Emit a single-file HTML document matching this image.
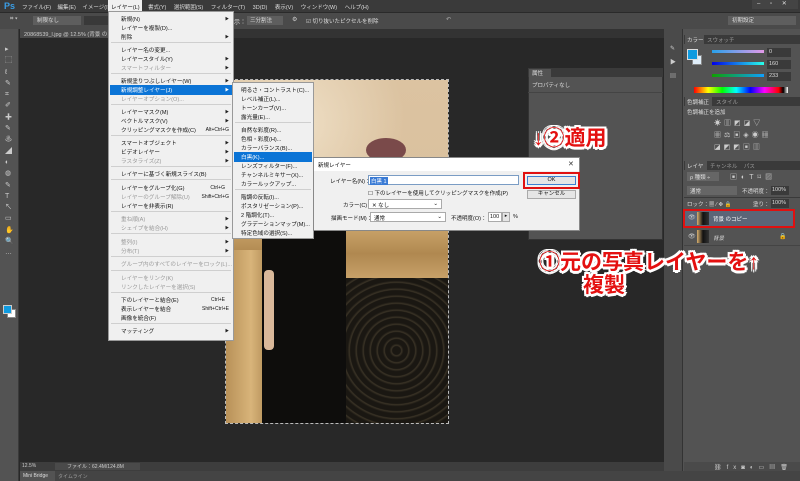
<!DOCTYPE html><html><head><meta charset="utf-8"><style>
*{margin:0;padding:0;box-sizing:border-box}
body{width:800px;height:481px;overflow:hidden;background:#282828;font-family:"Liberation Sans","Noto Sans CJK JP",sans-serif;font-size:6px;color:#ddd;position:relative}
.a{position:absolute}
.m{position:absolute;left:12px;white-space:nowrap;color:#111;font-size:5.6px}
.g{color:#999}
.s{position:absolute;left:2px;right:2px;height:1px;background:#cfcfcf}
.ar{position:absolute;right:4px;font-size:4px;color:#222}
.k{position:absolute;right:16px;color:#111;font-size:5px}
.ann{position:absolute;font-weight:bold;color:#e41010;font-size:21px;white-space:nowrap;line-height:22px;text-shadow:-2px -2px 0 #fff,2px -2px 0 #fff,-2px 2px 0 #fff,2px 2px 0 #fff,0 2px 0 #fff,0 -2px 0 #fff,2px 0 0 #fff,-2px 0 0 #fff,0 3px 0 #fff,3px 0 0 #fff}
</style></head><body>
<!-- menu bar -->
<div class="a" style="left:0;top:0;width:800px;height:12px;background:#3a3a3a"></div>
<div class="a" style="left:4px;top:1px;color:#3a9ee6;font-weight:bold;font-size:9px">Ps</div>
<div class="a" style="left:22px;top:3px;color:#ddd;white-space:nowrap;word-spacing:5px;font-size:5.5px">ファイル(F) 編集(E) イメージ(I)</div>
<div class="a" style="left:108px;top:0;width:34px;height:12px;background:#f0f0f0"></div>
<div class="a" style="left:111px;top:3px;color:#111;font-size:5.5px">レイヤー(L)</div>
<div class="a" style="left:148px;top:3px;color:#ddd;white-space:nowrap;word-spacing:6px;font-size:5.5px">書式(Y) 選択範囲(S) フィルター(T) 3D(D) 表示(V) ウィンドウ(W) ヘルプ(H)</div>
<div class="a" style="left:752px;top:0;width:46px;height:9px;background:#444;color:#ddd;font-size:6px;padding-left:5px;word-spacing:8px">–  ▫  ✕</div>
<!-- options bar -->
<div class="a" style="left:0;top:12px;width:800px;height:17px;background:#4a4a4a;border-top:1px solid #2a2a2a"></div>
<div class="a" style="left:10px;top:16px;color:#ccc">⌗ ▾</div>
<div class="a" style="left:33px;top:16px;width:48px;height:9px;background:#5e5e5e;color:#ddd;padding-left:4px;font-size:5.5px">制限なし</div>
<div class="a" style="left:84px;top:16px;width:24px;height:9px;background:#393939"></div>
<div class="a" style="left:234px;top:17px;color:#ddd">示：</div>
<div class="a" style="left:247px;top:16px;width:36px;height:9px;background:#5e5e5e;color:#ddd;padding-left:3px;font-size:5.5px">三分割法</div>
<div class="a" style="left:292px;top:16px;color:#ccc">⚙</div>
<div class="a" style="left:306px;top:17px;color:#ddd;font-size:5.5px">☑ 切り抜いたピクセルを削除</div>
<div class="a" style="left:446px;top:16px;color:#aaa">↶</div>
<div class="a" style="left:728px;top:16px;width:68px;height:9px;background:#5e5e5e;color:#ddd;padding-left:4px;font-size:5.5px">初期設定</div>
<!-- tool bar -->
<div class="a" style="left:0;top:29px;width:19px;height:452px;background:#535353;border-right:1px solid #3a3a3a"></div>
<div class="a" style="left:5px;top:44px;width:10px;height:300px;color:#ccc;font-size:7px;line-height:11.3px">▸<br>⬚<br>ℓ<br>✎<br>⌗<br>✐<br>✚<br>✎<br>♨<br>◢<br>◐<br>◍<br>✎<br>T<br>↖<br>▭<br>✋<br>🔍<br>…</div>
<div class="a" style="left:7px;top:309px;width:9px;height:9px;background:#fff;border:1px solid #888"></div>
<div class="a" style="left:3px;top:305px;width:9px;height:9px;background:#0f9be0;border:1px solid #ccc"></div>
<!-- doc tab -->
<div class="a" style="left:20px;top:29px;width:645px;height:9px;background:#333"></div>
<div class="a" style="left:20px;top:29px;width:90px;height:9px;background:#4a4a4a;color:#ccc;font-size:5.5px;padding:1px 0 0 4px;white-space:nowrap;overflow:hidden">20868539_l.jpg @ 12.5% (背景 の</div>
<!-- image -->
<div class="a" style="left:226px;top:80px;width:222px;height:343px;background:linear-gradient(#e6d3b6,#ddc4a0 40%,#c9a878);overflow:hidden;outline:1px dashed #bbb">
 <div class="a" style="left:0;top:0;width:222px;height:148px;background:radial-gradient(circle at 30% 30%,#f2e4cc 0,#d9bf9c 60%);opacity:.8"></div>
 <div class="a" style="left:140px;top:58px;width:40px;height:24px;background:#7a4a4a;border-radius:50%"></div>
 <div class="a" style="left:6px;top:148px;width:216px;height:52px;background:linear-gradient(#c9a36a,#b08850 50%,#c9a36a)"></div>
 <div class="a" style="left:0;top:170px;width:50px;height:173px;background:linear-gradient(90deg,#b89158,#d8b47a 50%,#a07a45)"></div>
 <div class="a" style="left:119px;top:198px;width:103px;height:145px;background:repeating-radial-gradient(circle at 50% 50%,#1a1712 0,#1a1712 4px,#3a3326 5px,#1a1712 7px)"></div>
 <div class="a" style="left:36px;top:120px;width:84px;height:223px;background:#0e0d0c;border-radius:18px 18px 0 0"></div>
 <div class="a" style="left:38px;top:190px;width:10px;height:80px;background:#d9b89a;border-radius:4px"></div>
</div>
<!-- status bar -->
<div class="a" style="left:20px;top:462px;width:645px;height:9px;background:#3d3d3d"></div>
<div class="a" style="left:22px;top:463px;color:#ccc;font-size:5px">12.5%</div>
<div class="a" style="left:55px;top:463px;width:85px;height:7px;background:#4a4a4a;color:#ccc;font-size:5px;padding-left:12px">ファイル：62.4M/124.8M</div>
<div class="a" style="left:20px;top:471px;width:780px;height:10px;background:#444"></div>
<div class="a" style="left:20px;top:471px;width:35px;height:10px;background:#535353;color:#ddd;font-size:5px;padding:2px 0 0 3px">Mini Bridge</div>
<div class="a" style="left:58px;top:473px;color:#999;font-size:5px">タイムライン</div>
<!-- properties panel -->
<div class="a" style="left:528px;top:68px;width:135px;height:172px;background:#535353;border:1px solid #333"></div>
<div class="a" style="left:528px;top:68px;width:135px;height:9px;background:#3a3a3a"></div>
<div class="a" style="left:529px;top:69px;width:22px;height:8px;background:#535353;color:#ddd;font-size:5.5px;padding-left:3px">属性</div>
<div class="a" style="left:532px;top:81px;color:#ddd;font-size:5.5px">プロパティなし</div>
<div class="a" style="left:528px;top:92px;width:135px;height:1px;background:#444"></div>
<!-- right strip -->
<div class="a" style="left:664px;top:29px;width:136px;height:442px;background:#535353"></div>
<div class="a" style="left:664px;top:29px;width:19px;height:442px;background:#4a4a4a;border-right:1px solid #333"></div>
<div class="a" style="left:670px;top:42px;color:#ccc;line-height:14px">✎<br>▶<br>▤</div>
<!-- color panel -->
<div class="a" style="left:684px;top:35px;width:116px;height:9px;background:#3a3a3a"></div>
<div class="a" style="left:685px;top:35px;width:19px;height:9px;background:#535353;color:#ddd;font-size:5.5px;padding:1px 0 0 2px">カラー</div>
<div class="a" style="left:707px;top:36px;color:#999;font-size:5.5px">スウォッチ</div>
<div class="a" style="left:692px;top:55px;width:10px;height:10px;background:#dfeefa;border:1px solid #888"></div>
<div class="a" style="left:687px;top:49px;width:11px;height:11px;background:#0f9be0;border:1px solid #ddd"></div>
<div class="a" style="left:712px;top:50px;width:52px;height:3px;background:linear-gradient(90deg,#28a0e9,#e39ae9)"></div>
<div class="a" style="left:712px;top:62px;width:52px;height:3px;background:linear-gradient(90deg,#0000e9,#29ffe9)"></div>
<div class="a" style="left:712px;top:74px;width:52px;height:3px;background:linear-gradient(90deg,#0fa000,#0fa0ff)"></div>
<div class="a" style="left:767px;top:48px;width:24px;height:9px;background:#3a3a3a;color:#ddd;font-size:5.5px;padding:1px 2px">0</div>
<div class="a" style="left:767px;top:60px;width:24px;height:9px;background:#3a3a3a;color:#ddd;font-size:5.5px;padding:1px 2px">160</div>
<div class="a" style="left:767px;top:72px;width:24px;height:9px;background:#3a3a3a;color:#ddd;font-size:5.5px;padding:1px 2px">233</div>
<div class="a" style="left:694px;top:87px;width:94px;height:6px;background:linear-gradient(90deg,#f00,#ff0,#0f0,#0ff,#00f,#f0f,#f00 90%,#000 95%,#fff)"></div>
<!-- adjustments -->
<div class="a" style="left:684px;top:97px;width:116px;height:9px;background:#3a3a3a"></div>
<div class="a" style="left:685px;top:97px;width:27px;height:9px;background:#535353;color:#ddd;font-size:5.5px;padding:1px 0 0 2px">色調補正</div>
<div class="a" style="left:716px;top:98px;color:#999;font-size:5.5px">スタイル</div>
<div class="a" style="left:687px;top:108px;color:#ddd;font-size:5.5px">色調補正を追加</div>
<div class="a" style="left:714px;top:118px;color:#ccc;font-size:7px;line-height:12px;letter-spacing:3px">☀▥◩◪▽<br>▦⚖▣◈◉▦<br>◪◩◩▣▥</div>
<!-- layers -->
<div class="a" style="left:684px;top:161px;width:116px;height:9px;background:#3a3a3a"></div>
<div class="a" style="left:685px;top:161px;width:22px;height:9px;background:#535353;color:#ddd;font-size:5.5px;padding:1px 0 0 2px">レイヤー</div>
<div class="a" style="left:710px;top:162px;color:#999;font-size:5.5px;word-spacing:5px">チャンネル パス</div>
<div class="a" style="left:687px;top:172px;width:32px;height:9px;background:#666;color:#ddd;font-size:5.5px;padding:1px 0 0 3px">ρ 種類 ÷</div>
<div class="a" style="left:730px;top:172px;color:#ccc;font-size:7px;letter-spacing:4px">▣◐T⌑▨</div>
<div class="a" style="left:687px;top:186px;width:50px;height:9px;background:#666;color:#ddd;font-size:5.5px;padding:1px 0 0 3px">通常</div>
<div class="a" style="left:742px;top:187px;color:#ddd;font-size:5.5px">不透明度：</div>
<div class="a" style="left:771px;top:186px;width:18px;height:9px;background:#3a3a3a;color:#ddd;font-size:5.5px;padding:1px">100%</div>
<div class="a" style="left:684px;top:197px;width:116px;height:1px;background:#3a3a3a"></div>
<div class="a" style="left:687px;top:200px;color:#ddd;font-size:5.5px">ロック：▦ ⁄ ✥ 🔒</div>
<div class="a" style="left:753px;top:200px;color:#ddd;font-size:5.5px">塗り：</div>
<div class="a" style="left:771px;top:199px;width:18px;height:9px;background:#3a3a3a;color:#ddd;font-size:5.5px;padding:1px">100%</div>
<div class="a" style="left:684px;top:210px;width:111px;height:17px;background:#5b6577"></div>
<div class="a" style="left:683px;top:209px;width:112px;height:19px;border:2px solid #e01010"></div>
<div class="a" style="left:688px;top:214px;color:#ccc;font-size:6px">👁</div>
<div class="a" style="left:697px;top:212px;width:12px;height:13px;background:linear-gradient(90deg,#d8b070,#111 50%,#333)"></div>
<div class="a" style="left:713px;top:215px;color:#fff;font-size:5.5px">背景 のコピー</div>
<div class="a" style="left:684px;top:228px;width:116px;height:18px;background:#535353;border-bottom:1px solid #444"></div>
<div class="a" style="left:688px;top:233px;color:#ccc;font-size:6px">👁</div>
<div class="a" style="left:697px;top:230px;width:12px;height:13px;background:linear-gradient(90deg,#d8b070,#111 50%,#333)"></div>
<div class="a" style="left:713px;top:234px;color:#ddd;font-size:5.5px;font-style:italic">背景</div>
<div class="a" style="left:779px;top:233px;color:#ccc;font-size:6px">🔒</div>
<div class="a" style="left:684px;top:462px;width:116px;height:9px;background:#4a4a4a;color:#ccc;font-size:6px;padding-left:30px;letter-spacing:5px">⛓fx◙◐▭▤🗑</div>
<!-- main menu -->
<div class="a" style="left:108px;top:11px;width:126px;height:330px;background:#f0f0f0;border:1px solid #999">
<div class="m" style="top:3px">新規(N)</div><div class="ar" style="top:4px">▶</div>
<div class="m" style="top:12px">レイヤーを複製(D)...</div>
<div class="m" style="top:21px">削除</div><div class="ar" style="top:22px">▶</div>
<div class="s" style="top:30px"></div>
<div class="m" style="top:34px">レイヤー名の変更...</div>
<div class="m" style="top:43px">レイヤースタイル(Y)</div><div class="ar" style="top:44px">▶</div>
<div class="m g" style="top:52px">スマートフィルター</div><div class="ar" style="top:53px">▶</div>
<div class="s" style="top:61px"></div>
<div class="m" style="top:65px">新規塗りつぶしレイヤー(W)</div><div class="ar" style="top:66px">▶</div>
<div class="a" style="left:1px;top:73px;width:122px;height:10px;background:#0b74d6"></div>
<div class="m" style="top:74px;color:#fff">新規調整レイヤー(J)</div><div class="ar" style="top:75px;color:#fff">▶</div>
<div class="m g" style="top:83px">レイヤーオプション(O)...</div>
<div class="s" style="top:92px"></div>
<div class="m" style="top:96px">レイヤーマスク(M)</div><div class="ar" style="top:97px">▶</div>
<div class="m" style="top:105px">ベクトルマスク(V)</div><div class="ar" style="top:106px">▶</div>
<div class="m" style="top:114px">クリッピングマスクを作成(C)</div><div class="k" style="top:115px;right:4px">Alt+Ctrl+G</div>
<div class="s" style="top:123px"></div>
<div class="m" style="top:127px">スマートオブジェクト</div><div class="ar" style="top:128px">▶</div>
<div class="m" style="top:136px">ビデオレイヤー</div><div class="ar" style="top:137px">▶</div>
<div class="m g" style="top:145px">ラスタライズ(Z)</div><div class="ar" style="top:146px">▶</div>
<div class="s" style="top:154px"></div>
<div class="m" style="top:158px">レイヤーに基づく新規スライス(B)</div>
<div class="s" style="top:167px"></div>
<div class="m" style="top:172px">レイヤーをグループ化(G)</div><div class="k" style="top:173px;right:8px">Ctrl+G</div>
<div class="m g" style="top:181px">レイヤーのグループ解除(U)</div><div class="k g" style="top:182px;right:4px">Shift+Ctrl+G</div>
<div class="m" style="top:190px">レイヤーを非表示(R)</div>
<div class="s" style="top:199px"></div>
<div class="m g" style="top:203px">重ね順(A)</div><div class="ar" style="top:204px">▶</div>
<div class="m g" style="top:212px">シェイプを結合(H)</div><div class="ar" style="top:213px">▶</div>
<div class="s" style="top:221px"></div>
<div class="m g" style="top:226px">整列(I)</div><div class="ar" style="top:227px">▶</div>
<div class="m g" style="top:235px">分布(T)</div><div class="ar" style="top:236px">▶</div>
<div class="s" style="top:244px"></div>
<div class="m g" style="top:248px">グループ内のすべてのレイヤーをロック(L)...</div>
<div class="s" style="top:258px"></div>
<div class="m g" style="top:262px">レイヤーをリンク(K)</div>
<div class="m g" style="top:271px">リンクしたレイヤーを選択(S)</div>
<div class="s" style="top:280px"></div>
<div class="m" style="top:284px">下のレイヤーと結合(E)</div><div class="k" style="top:285px;right:8px">Ctrl+E</div>
<div class="m" style="top:293px">表示レイヤーを結合</div><div class="k" style="top:294px;right:4px">Shift+Ctrl+E</div>
<div class="m" style="top:302px">画像を統合(F)</div>
<div class="s" style="top:311px"></div>
<div class="m" style="top:315px">マッティング</div><div class="ar" style="top:316px">▶</div>
</div>
<!-- submenu -->
<div class="a" style="left:232px;top:82px;width:82px;height:157px;background:#f0f0f0;border:1px solid #999">
<div class="m" style="left:8px;top:3px">明るさ・コントラスト(C)...</div>
<div class="m" style="left:8px;top:12px">レベル補正(L)...</div>
<div class="m" style="left:8px;top:21px">トーンカーブ(V)...</div>
<div class="m" style="left:8px;top:30px">露光量(E)...</div>
<div class="s" style="top:39px"></div>
<div class="m" style="left:8px;top:43px">自然な彩度(R)...</div>
<div class="m" style="left:8px;top:52px">色相・彩度(H)...</div>
<div class="m" style="left:8px;top:61px">カラーバランス(B)...</div>
<div class="a" style="left:1px;top:69px;width:78px;height:10px;background:#0b74d6"></div>
<div class="m" style="left:8px;top:70px;color:#fff">白黒(K)...</div>
<div class="m" style="left:8px;top:79px">レンズフィルター(F)...</div>
<div class="m" style="left:8px;top:88px">チャンネルミキサー(X)...</div>
<div class="m" style="left:8px;top:97px">カラールックアップ...</div>
<div class="s" style="top:106px"></div>
<div class="m" style="left:8px;top:110px">階調の反転(I)...</div>
<div class="m" style="left:8px;top:119px">ポスタリゼーション(P)...</div>
<div class="m" style="left:8px;top:128px">2 階調化(T)...</div>
<div class="m" style="left:8px;top:137px">グラデーションマップ(M)...</div>
<div class="m" style="left:8px;top:146px">特定色域の選択(S)...</div>
</div>
<!-- dialog -->
<div class="a" style="left:313px;top:157px;width:267px;height:74px;background:#f0f0f0;border:1px solid #888">
<div class="a" style="left:0;top:0;width:265px;height:13px;background:#fff"></div>
<div class="a" style="left:4px;top:3px;color:#111;font-size:5.5px">新規レイヤー</div>
<div class="a" style="left:254px;top:2px;color:#333;font-size:7px">✕</div>
<div class="a" style="left:16px;top:19px;color:#111;font-size:5.5px">レイヤー名(N)：</div>
<div class="a" style="left:54px;top:17px;width:151px;height:10px;background:#fff;border:1px solid #7a9cc4"></div>
<div class="a" style="left:56px;top:19px;background:#3a7bd5;color:#fff;font-size:5.5px;padding:0 1px">白黒 1</div>
<div class="a" style="left:209px;top:14px;width:57px;height:17px;border:2px solid #e01010"></div>
<div class="a" style="left:213px;top:18px;width:49px;height:9px;background:#e5e5e5;border:1px solid #3c7fd1;color:#111;font-size:5.5px;text-align:center;line-height:7px">OK</div>
<div class="a" style="left:213px;top:32px;width:49px;height:9px;background:#e5e5e5;border:1px solid #aaa;color:#111;font-size:5.5px;text-align:center;line-height:7px">キャンセル</div>
<div class="a" style="left:54px;top:31px;color:#111;font-size:5.5px">☐ 下のレイヤーを使用してクリッピングマスクを作成(P)</div>
<div class="a" style="left:29px;top:43px;color:#111;font-size:5.5px">カラー(C)：</div>
<div class="a" style="left:54px;top:41px;width:74px;height:10px;background:#fff;border:1px solid #aaa;color:#111;font-size:5.5px;padding:1px 0 0 3px">✕ なし<span style="float:right;padding-right:3px">⌄</span></div>
<div class="a" style="left:17px;top:56px;color:#111;font-size:5.5px">描画モード(M)：</div>
<div class="a" style="left:56px;top:54px;width:76px;height:10px;background:#fff;border:1px solid #aaa;color:#111;font-size:5.5px;padding:1px 0 0 3px">通常<span style="float:right;padding-right:3px">⌄</span></div>
<div class="a" style="left:137px;top:56px;color:#111;font-size:5.5px">不透明度(O)：</div>
<div class="a" style="left:174px;top:54px;width:14px;height:10px;background:#fff;border:1px solid #aaa;color:#111;font-size:5.5px;padding:1px 0 0 1px">100</div>
<div class="a" style="left:188px;top:54px;width:8px;height:10px;background:#e5e5e5;border:1px solid #aaa;color:#111;font-size:5px;text-align:center">▸</div>
<div class="a" style="left:199px;top:56px;color:#111;font-size:5.5px">%</div>
</div>
<!-- annotations -->
<div class="ann" style="left:533px;top:128px">↓②適用</div>
<div class="ann" style="left:539px;top:252px">①元の写真レイヤーを↑</div>
<div class="ann" style="left:583px;top:275px">複製</div>
</body></html>
